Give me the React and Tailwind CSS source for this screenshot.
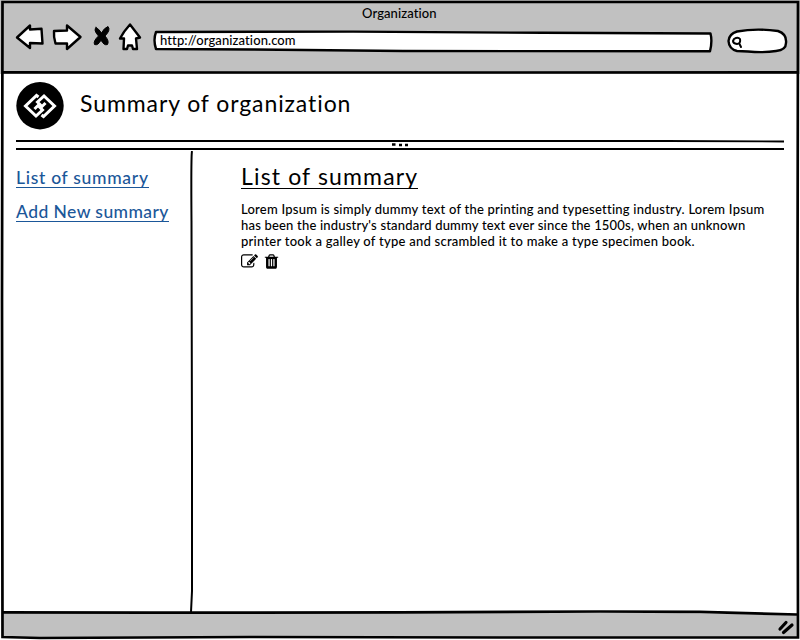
const FONT = "font-['Lato','Open_Sans',sans-serif] font-medium";

function Arrows() {
  return (
    <svg className="h-[74px] w-[153px] shrink-0" viewBox="0 0 153 74" fill="white" stroke="black" strokeWidth="2.400" strokeLinejoin="round" strokeLinecap="round">
      <path d="M17 37.5 L30 25.500 L30 29.500 L41.500 28.800 L42.500 43.500 L30 43 L30 48 Z" />
      <path d="M54 31 L67 30.500 L67 25.500 L80.5 37 L67 49 L67 43.500 L55.5 43.500 Q53.5 37 54 31 Z" />
      <path d="M96 27.500 Q99 29 101.5 33 Q104 28 108 26.500 Q111 30 105 36 Q109.500 41 107.5 44.500 Q104 46 101 40 Q98 46 94.500 44.500 Q93 41 98.500 36 Q93 30 96 27.500 Z" fill="black" strokeWidth="1" />
      <path d="M130 24.500 L140 37.500 L136 38.500 L137 49 L133 49 L132 45.500 L128 45.500 L127 49 L123.500 49 L124 38.500 L120 38.500 Q124 31 130 24.500 Z" />
    </svg>
  );
}

function Header() {
  return (
    <header className="relative flex h-[74px] w-full shrink-0 bg-[#c1c1c1]">
      <Arrows />
      <div className="relative mt-[30px] h-[23px] w-[561px]">
        <svg className="absolute inset-0 h-full w-full" viewBox="0 -1 561 23" fill="white" stroke="black" strokeWidth="2.400" strokeLinejoin="round">
          <path d="M3 1 L200 .6 L390 1.800 L557.500 2.500 Q559.500 10 557 20.300 L250 20 L100 18.500 L3 18 Q0 9 3 1 Z" />
        </svg>
        <p className="relative pl-[7px] text-[13px] leading-[20px] tracking-[0.1px]">http://organization.com</p>
      </div>
      <svg className="ml-[12px] mt-[27px] h-[27px] w-[63px]" viewBox="726 27 63 27" fill="white" stroke="black" strokeWidth="2.400" strokeLinecap="round" strokeLinejoin="round">
        <path d="M737 31.500 Q756 28 778 31 Q787 34 786 43 Q786 50 776 51 Q764 53 748 51.500 L737 51 Q729 49 728.500 41 Q729 34 737 31.500 Z" />
        <path d="M734 39 Q738 36.500 740 39 Q741 43.500 737 44 Q733 43.500 733 41 L734 39 M739.500 44 L741 47" strokeWidth="2" />
      </svg>
      <p className="absolute left-[362px] top-[5px] text-[13px] leading-[17px] tracking-[0.1px]">Organization</p>
      <svg className="absolute left-0 top-[70px] h-[5px] w-full" viewBox="0 0 800 5" fill="none">
        <path d="M3 2.300 L250 2.500 L500 2.500 L798 2.300" stroke="black" strokeWidth="2.700" />
      </svg>
    </header>
  );
}

function Logo() {
  return (
    <svg className="h-[48px] w-[48px]" viewBox="0 0 48 48">
      <circle cx="24" cy="23.700" r="23.700" />
      <g fill="none" stroke="white" strokeWidth="3">
        <path d="M22.500 15 L20.500 13.500 L9.500 24 L20 34 L26.500 28 L22 23.500 L18.500 27" />
        <path d="M25.500 33 L27.500 34.500 L38.500 24 L28 14 L21.500 20 L26 24.500 L29.500 21" />
      </g>
    </svg>
  );
}

function EditIcon() {
  return (
    <svg className="h-[17px] w-[17px]" viewBox="0 0 1792 1792">
      <path d="M888 1184l116-116-152-152-116 116v56h96v96h56zm440-720q-16-16-33 1l-350 350q-17 17-1 33t33-1l350-350q17-17 1-33zm80 594v190q0 119-84.500 203.500t-203.500 84.500h-832q-119 0-203.500-84.500t-84.500-203.500v-832q0-119 84.500-203.500t203.500-84.500h832q63 0 117 25 15 7 18 23 3 17-9 29l-49 49q-14 14-32 8-23-6-45-6h-832q-66 0-113 47t-47 113v832q0 66 47 113t113 47h832q66 0 113-47t47-113v-126q0-13 9-22l64-64q15-15 35-7t20 29zm-96-738l288 288-672 672h-288v-288zm444 132l-92 92-288-288 92-92q28-28 68-28t68 28l152 152q28 28 28 68t-28 68z" />
    </svg>
  );
}

function TrashIcon() {
  return (
    <svg className="h-[17px] w-[17px]" viewBox="0 0 1792 1792">
      <path d="M704 1376v-704q0-14-9-23t-23-9h-64q-14 0-23 9t-9 23v704q0 14 9 23t23 9h64q14 0 23-9t9-23zm256 0v-704q0-14-9-23t-23-9h-64q-14 0-23 9t-9 23v704q0 14 9 23t23 9h64q14 0 23-9t9-23zm256 0v-704q0-14-9-23t-23-9h-64q-14 0-23 9t-9 23v704q0 14 9 23t23 9h64q14 0 23-9t9-23zm-544-992h448l-48-117q-7-9-17-11h-317q-10 2-17 11zm928 32v64q0 14-9 23t-23 9h-96v948q0 83-47 143.500t-113 60.500h-832q-66 0-113-58.500t-47-141.500v-952h-96q-14 0-23-9t-9-23v-64q0-14 9-23t23-9h309l70-167q15-37 54-63t79-26h320q40 0 79 26t54 63l70 167h309q14 0 23 9t9 23z" />
    </svg>
  );
}

export default function App() {
  return (
    <div className={`relative flex h-[640px] w-[800px] flex-col overflow-hidden bg-white text-black ${FONT}`}>
      <Header />
      <div className="flex h-[65px] shrink-0 items-start pl-4 pt-2">
        <Logo />
        <h1 className="ml-4 mt-[7px] whitespace-nowrap text-[23px] font-normal leading-[28px] tracking-[0.91px]">Summary of organization</h1>
      </div>
      <svg className="ml-4 h-[12px] w-[768px] shrink-0" viewBox="0 0 768 12" fill="none" stroke="black">
        <path d="M0 2 L650 2 L768 2.500" strokeWidth="1.800" />
        <path d="M0 10 H768" strokeWidth="2" />
        <path d="M376 5.500 h3.500 M383 6 h3 M389 6 h3" strokeWidth="2.400" />
      </svg>
      <div className="flex h-[461px] shrink-0">
        <nav className="flex w-[188px] flex-col items-start gap-[14px] pl-4 pt-[17px] text-[17.5px] leading-[19px] text-[#1b5799]">
          <a className="whitespace-nowrap border-b border-[#1b5799] tracking-[0.7px]">List of summary</a>
          <a className="whitespace-nowrap border-b border-[#1b5799] tracking-[0.42px]">Add New summary</a>
        </nav>
        <svg className="h-[461px] w-[8px]" viewBox="0 0 8 461" fill="none" stroke="black" strokeWidth="2">
          <path d="M4 0 Q3 5 3.500 70 L4 300 L4 440 L3 461" />
        </svg>
        <main className="pl-[45px] pt-[13px]">
          <h2 className="block h-[25px] w-fit whitespace-nowrap border-b border-black text-[23px] font-normal leading-[25px] tracking-[1.15px]">List of summary</h2>
          <div className="mt-[12px] whitespace-nowrap text-[13px] leading-[16px]">
            <p className="tracking-[0.23px]">Lorem Ipsum is simply dummy text of the printing and typesetting industry. Lorem Ipsum</p>
            <p className="tracking-[0.19px]">has been the industry's standard dummy text ever since the 1500s, when an unknown</p>
            <p className="tracking-[0.25px]">printer took a galley of type and scrambled it to make a type specimen book.</p>
          </div>
          <div className="mt-[4px] flex gap-[5px]">
            <EditIcon />
            <TrashIcon />
          </div>
        </main>
      </div>
      <footer className="h-[28px] w-full">
        <svg className="h-full w-full" viewBox="0 612 800 28" fill="none" stroke="black">
          <path d="M3 612.500 H650 L798 615 V638 H3 Z" fill="#c1c1c1" stroke="none" />
          <path d="M780 629 L786 622.500 M783.500 632.500 L792 625" strokeWidth="3.200" strokeLinecap="round" />
        </svg>
      </footer>
      <svg className="pointer-events-none absolute inset-0 h-full w-full" viewBox="0 0 800 640" fill="none" stroke="black" strokeWidth="2.700">
        <path d="M2.500 2 H798 L797.500 300 L798 637.500 L500 637.500 L250 637 L40 638 L2.500 637 L2 300 Z" />
        <path d="M3 612.300 L150 612.700 L400 612.300 L600 611.500 L700 611.800 L797 614.500" />
      </svg>
    </div>
  );
}
